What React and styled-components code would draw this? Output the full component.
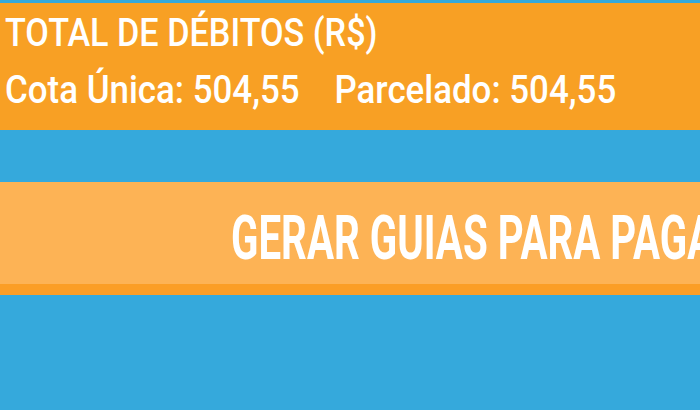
import React from 'react'
import styled, { createGlobalStyle } from 'styled-components'

const GlobalStyle = createGlobalStyle`
  html, body {
    margin: 0;
    padding: 0;
    background: #35a9dc;
  }
  body {
    font-family: Roboto, "Noto Sans", sans-serif;
    overflow: hidden;
  }
`

const Page = styled.div`
  height: 410px;
  padding-top: 3px;
  box-sizing: border-box;
  background: #35a9dc;
  overflow: hidden;
`

const Summary = styled.div`
  height: 127px;
  box-sizing: border-box;
  background: #f8a024;
  padding: 10px 0 0 5px;
  display: flex;
  flex-direction: column;
  gap: 17px;
`

const Line = styled.div`
  color: #fff;
  font-size: 38px;
  font-weight: 500;
  line-height: 40px;
  white-space: nowrap;
  transform: scaleX(${(p) => p.$squeeze || 0.9});
  transform-origin: left center;
`

const Total = styled.span`
  & + & {
    margin-left: 38px;
  }
`

const GuideButton = styled.button`
  display: flex;
  align-items: center;
  width: 100%;
  height: 113px;
  margin: 52px 0 0;
  padding: 10px 0 0 231px;
  box-sizing: border-box;
  border: none;
  border-bottom: 11px solid #fb9e26;
  background: #fdb355;
  overflow: hidden;
  cursor: pointer;
`

const ButtonLabel = styled.span`
  color: #fff;
  font-family: Roboto, "Noto Sans", sans-serif;
  font-size: 61px;
  font-weight: 700;
  line-height: 60px;
  white-space: nowrap;
  transform: scaleX(0.66);
  transform-origin: left center;
`

const App = () => {
  return (
    <>
      <GlobalStyle />
      <Page>
        <Summary>
          <Line>TOTAL DE DÉBITOS (R$)</Line>
          <Line $squeeze={0.918}>
            <Total>Cota Única: 504,55</Total>
            <Total>Parcelado: 504,55</Total>
          </Line>
        </Summary>
        <GuideButton>
          <ButtonLabel>GERAR GUIAS PARA PAGAMENTO</ButtonLabel>
        </GuideButton>
      </Page>
    </>
  )
}

export default App
